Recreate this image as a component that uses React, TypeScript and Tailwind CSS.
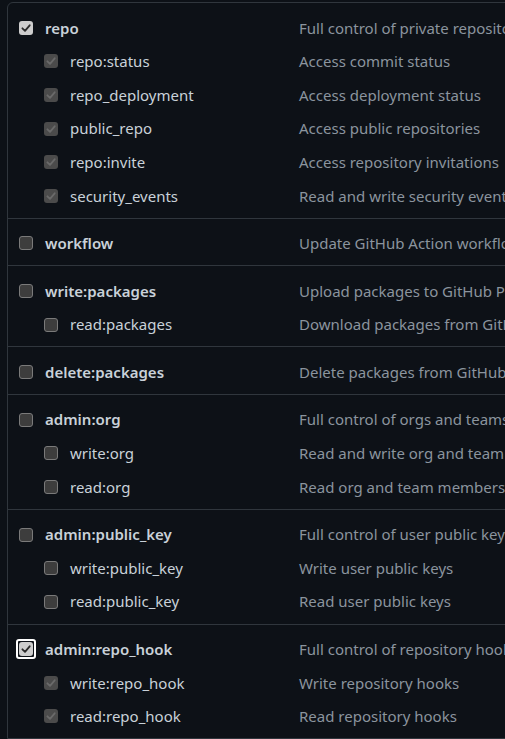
import React from "react";

type Scope = { name: string; desc: string; state: "on" | "off" | "inherit"; focus?: boolean };
type Group = { top: Scope; children?: Scope[] };

const groups: Group[] = [
  {
    top: { name: "repo", desc: "Full control of private repositories", state: "on" },
    children: [
      { name: "repo:status", desc: "Access commit status", state: "inherit" },
      { name: "repo_deployment", desc: "Access deployment status", state: "inherit" },
      { name: "public_repo", desc: "Access public repositories", state: "inherit" },
      { name: "repo:invite", desc: "Access repository invitations", state: "inherit" },
      { name: "security_events", desc: "Read and write security events", state: "inherit" },
    ],
  },
  { top: { name: "workflow", desc: "Update GitHub Action workflows", state: "off" } },
  {
    top: { name: "write:packages", desc: "Upload packages to GitHub Package Registry", state: "off" },
    children: [{ name: "read:packages", desc: "Download packages from GitHub Package Registry", state: "off" }],
  },
  { top: { name: "delete:packages", desc: "Delete packages from GitHub Package Registry", state: "off" } },
  {
    top: { name: "admin:org", desc: "Full control of orgs and teams, read and write org projects", state: "off" },
    children: [
      { name: "write:org", desc: "Read and write org and team membership", state: "off" },
      { name: "read:org", desc: "Read org and team membership, read org projects", state: "off" },
    ],
  },
  {
    top: { name: "admin:public_key", desc: "Full control of user public keys", state: "off" },
    children: [
      { name: "write:public_key", desc: "Write user public keys", state: "off" },
      { name: "read:public_key", desc: "Read user public keys", state: "off" },
    ],
  },
  {
    top: { name: "admin:repo_hook", desc: "Full control of repository hooks", state: "on", focus: true },
    children: [
      { name: "write:repo_hook", desc: "Write repository hooks", state: "inherit" },
      { name: "read:repo_hook", desc: "Read repository hooks", state: "inherit" },
    ],
  },
];

const Check = ({ color }: { color: string }) => (
  <svg width="10" height="10" viewBox="0 0 10 10" fill="none">
    <path d="M1.4 5.3 L4 7.8 L8.7 2.3" stroke={color} strokeWidth="1.8" strokeLinecap="round" strokeLinejoin="round" />
  </svg>
);

const Box = ({ state, focus }: { state: Scope["state"]; focus?: boolean }) => {
  let box;
  if (state === "on") {
    box = (
      <span className="flex h-[14px] w-[14px] items-center justify-center rounded-[3px] bg-[#cdcdcd]">
        <Check color="#2b2b2b" />
      </span>
    );
  } else if (state === "inherit") {
    box = (
      <span className="flex h-[14px] w-[14px] items-center justify-center rounded-[3px] bg-[#4b4b4b]">
        <Check color="#6a6a6a" />
      </span>
    );
  } else {
    box = <span className="block h-[14px] w-[14px] rounded-[3px] border border-[#7a7a7a] bg-[#3d3d3d]" />;
  }
  if (focus) {
    return <span className="-m-[3px] flex rounded-[3px] border-2 border-white p-px">{box}</span>;
  }
  return box;
};

const Row = ({ scope, child }: { scope: Scope; child?: boolean }) => (
  <div className="flex h-[33.6px] items-center whitespace-nowrap text-[15px]">
    <div className={`flex w-[291px] shrink-0 items-center ${child ? "pl-[36px]" : "pl-[11px]"}`}>
      <Box state={scope.state} focus={scope.focus} />
      <span className={`ml-[12px] text-[#c9d1d9] ${child ? "" : "font-semibold"}`}>{scope.name}</span>
    </div>
    <span className="text-[#8b949e]">{scope.desc}</span>
  </div>
);

export default function App() {
  return (
    <div
      className="h-[739px] w-[505px] overflow-hidden bg-[#0d1117] pl-[7px] pt-[2px]"
      style={{ fontFamily: '"Noto Sans", "Segoe UI", sans-serif' }}
    >
      <div className="w-[760px] rounded-tl-[6px] border border-[#30363d]">
        {groups.map((g, i) => (
          <div key={g.top.name} className={`pb-[5px] pt-[8px] ${i > 0 ? "border-t border-[#30363d]" : ""}`}>
            <Row scope={g.top} />
            {g.children?.map((c) => <Row key={c.name} scope={c} child />)}
          </div>
        ))}
      </div>
    </div>
  );
}
